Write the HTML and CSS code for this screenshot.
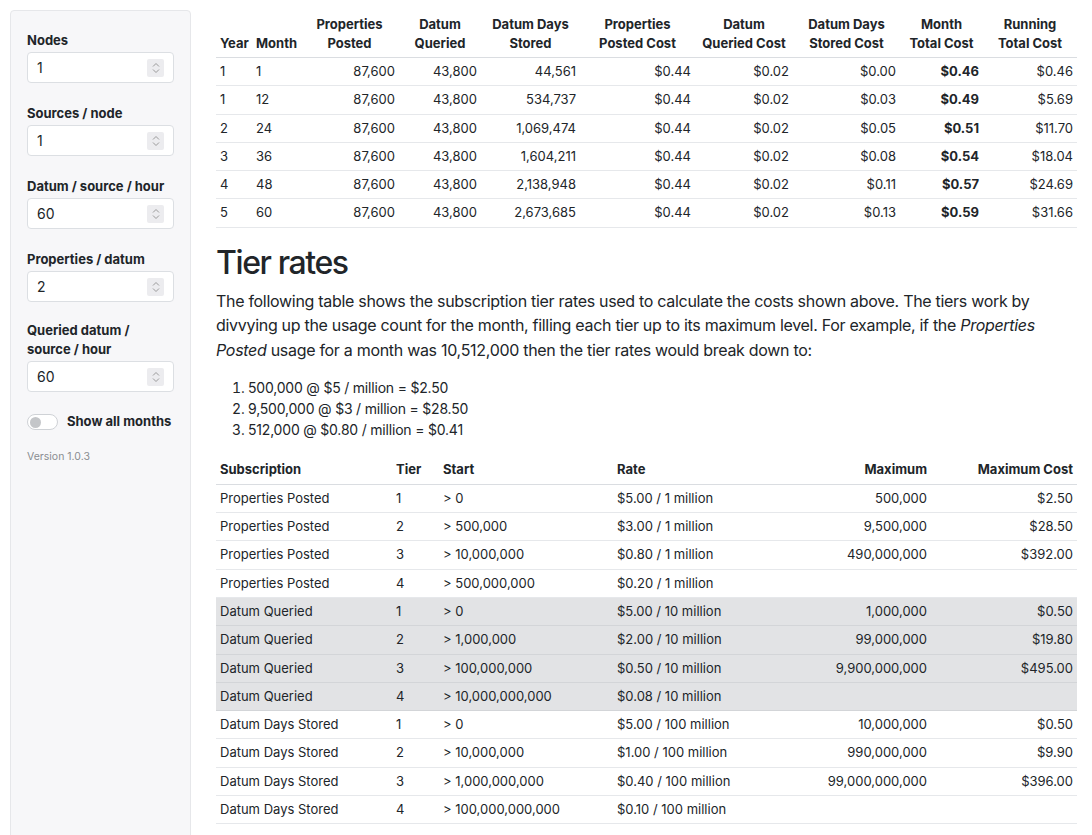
FILE: index.html
```html
<!DOCTYPE html>
<html>
<head>
<meta charset="utf-8">
<link rel="stylesheet" href="styles.css">
</head>
<body>
<div class="page">
  <aside class="sidebar">
    <div class="group">
      <label class="lbl">Nodes</label>
      <div class="num"><span>1</span><span class="spin"><svg width="8" height="12" viewBox="0 0 8 12"><path d="M1 4.5 L4 1.5 L7 4.5 M1 7.5 L4 10.5 L7 7.5" fill="none" stroke="#9a9a9a" stroke-width="1"/></svg></span></div>
    </div>
    <div class="group">
      <label class="lbl">Sources / node</label>
      <div class="num"><span>1</span><span class="spin"><svg width="8" height="12" viewBox="0 0 8 12"><path d="M1 4.5 L4 1.5 L7 4.5 M1 7.5 L4 10.5 L7 7.5" fill="none" stroke="#9a9a9a" stroke-width="1"/></svg></span></div>
    </div>
    <div class="group">
      <label class="lbl">Datum / source / hour</label>
      <div class="num"><span>60</span><span class="spin"><svg width="8" height="12" viewBox="0 0 8 12"><path d="M1 4.5 L4 1.5 L7 4.5 M1 7.5 L4 10.5 L7 7.5" fill="none" stroke="#9a9a9a" stroke-width="1"/></svg></span></div>
    </div>
    <div class="group">
      <label class="lbl">Properties / datum</label>
      <div class="num"><span>2</span><span class="spin"><svg width="8" height="12" viewBox="0 0 8 12"><path d="M1 4.5 L4 1.5 L7 4.5 M1 7.5 L4 10.5 L7 7.5" fill="none" stroke="#9a9a9a" stroke-width="1"/></svg></span></div>
    </div>
    <div class="group tight">
      <label class="lbl two">Queried datum /<br>source / hour</label>
      <div class="num"><span>60</span><span class="spin"><svg width="8" height="12" viewBox="0 0 8 12"><path d="M1 4.5 L4 1.5 L7 4.5 M1 7.5 L4 10.5 L7 7.5" fill="none" stroke="#9a9a9a" stroke-width="1"/></svg></span></div>
    </div>
    <div class="toggle-row">
      <span class="switch"><span class="knob"></span></span>
      <span class="toggle-label">Show all months</span>
    </div>
    <div class="version">Version 1.0.3</div>
  </aside>

  <main class="main">
    <table class="tbl costs">
      <colgroup>
        <col style="width:36px"><col style="width:48px"><col style="width:99px"><col style="width:82px"><col style="width:99px"><col style="width:115px"><col style="width:98px"><col style="width:107px"><col style="width:83px"><col style="width:94px">
      </colgroup>
      <thead>
        <tr>
          <th class="l">Year</th><th class="l">Month</th><th>Properties<br>Posted</th><th>Datum<br>Queried</th><th>Datum Days<br>Stored</th><th>Properties<br>Posted Cost</th><th>Datum<br>Queried Cost</th><th>Datum Days<br>Stored Cost</th><th>Month<br>Total Cost</th><th>Running<br>Total Cost</th>
        </tr>
      </thead>
      <tbody>
        <tr><td>1</td><td>1</td><td class="r">87,600</td><td class="r">43,800</td><td class="r">44,561</td><td class="r">$0.44</td><td class="r">$0.02</td><td class="r">$0.00</td><td class="r b">$0.46</td><td class="r">$0.46</td></tr>
        <tr><td>1</td><td>12</td><td class="r">87,600</td><td class="r">43,800</td><td class="r">534,737</td><td class="r">$0.44</td><td class="r">$0.02</td><td class="r">$0.03</td><td class="r b">$0.49</td><td class="r">$5.69</td></tr>
        <tr><td>2</td><td>24</td><td class="r">87,600</td><td class="r">43,800</td><td class="r">1,069,474</td><td class="r">$0.44</td><td class="r">$0.02</td><td class="r">$0.05</td><td class="r b">$0.51</td><td class="r">$11.70</td></tr>
        <tr><td>3</td><td>36</td><td class="r">87,600</td><td class="r">43,800</td><td class="r">1,604,211</td><td class="r">$0.44</td><td class="r">$0.02</td><td class="r">$0.08</td><td class="r b">$0.54</td><td class="r">$18.04</td></tr>
        <tr><td>4</td><td>48</td><td class="r">87,600</td><td class="r">43,800</td><td class="r">2,138,948</td><td class="r">$0.44</td><td class="r">$0.02</td><td class="r">$0.11</td><td class="r b">$0.57</td><td class="r">$24.69</td></tr>
        <tr><td>5</td><td>60</td><td class="r">87,600</td><td class="r">43,800</td><td class="r">2,673,685</td><td class="r">$0.44</td><td class="r">$0.02</td><td class="r">$0.13</td><td class="r b">$0.59</td><td class="r">$31.66</td></tr>
      </tbody>
    </table>

    <h2 class="title">Tier rates</h2>
    <p class="intro">The following table shows the subscription tier rates used to calculate the costs shown above. The tiers work by divvying up the usage count for the month, filling each tier up to its maximum level. For example, if the <em>Properties Posted</em> usage for a month was 10,512,000 then the tier rates would break down to:</p>
    <ol class="breakdown">
      <li>500,000 @ $5 / million = $2.50</li>
      <li>9,500,000 @ $3 / million = $28.50</li>
      <li>512,000 @ $0.80 / million = $0.41</li>
    </ol>

    <table class="tbl tiers">
      <colgroup>
        <col style="width:176px"><col style="width:47px"><col style="width:174px"><col style="width:167px"><col style="width:151px"><col style="width:146px">
      </colgroup>
      <thead>
        <tr><th class="l">Subscription</th><th class="l">Tier</th><th class="l">Start</th><th class="l">Rate</th><th class="r">Maximum</th><th class="r">Maximum Cost</th></tr>
      </thead>
      <tbody>
        <tr><td>Properties Posted</td><td>1</td><td>&gt; 0</td><td>$5.00 / 1 million</td><td class="r">500,000</td><td class="r">$2.50</td></tr>
        <tr><td>Properties Posted</td><td>2</td><td>&gt; 500,000</td><td>$3.00 / 1 million</td><td class="r">9,500,000</td><td class="r">$28.50</td></tr>
        <tr><td>Properties Posted</td><td>3</td><td>&gt; 10,000,000</td><td>$0.80 / 1 million</td><td class="r">490,000,000</td><td class="r">$392.00</td></tr>
        <tr><td>Properties Posted</td><td>4</td><td>&gt; 500,000,000</td><td>$0.20 / 1 million</td><td class="r"></td><td class="r"></td></tr>
        <tr class="shade"><td>Datum Queried</td><td>1</td><td>&gt; 0</td><td>$5.00 / 10 million</td><td class="r">1,000,000</td><td class="r">$0.50</td></tr>
        <tr class="shade"><td>Datum Queried</td><td>2</td><td>&gt; 1,000,000</td><td>$2.00 / 10 million</td><td class="r">99,000,000</td><td class="r">$19.80</td></tr>
        <tr class="shade"><td>Datum Queried</td><td>3</td><td>&gt; 100,000,000</td><td>$0.50 / 10 million</td><td class="r">9,900,000,000</td><td class="r">$495.00</td></tr>
        <tr class="shade"><td>Datum Queried</td><td>4</td><td>&gt; 10,000,000,000</td><td>$0.08 / 10 million</td><td class="r"></td><td class="r"></td></tr>
        <tr><td>Datum Days Stored</td><td>1</td><td>&gt; 0</td><td>$5.00 / 100 million</td><td class="r">10,000,000</td><td class="r">$0.50</td></tr>
        <tr><td>Datum Days Stored</td><td>2</td><td>&gt; 10,000,000</td><td>$1.00 / 100 million</td><td class="r">990,000,000</td><td class="r">$9.90</td></tr>
        <tr><td>Datum Days Stored</td><td>3</td><td>&gt; 1,000,000,000</td><td>$0.40 / 100 million</td><td class="r">99,000,000,000</td><td class="r">$396.00</td></tr>
        <tr><td>Datum Days Stored</td><td>4</td><td>&gt; 100,000,000,000</td><td>$0.10 / 100 million</td><td class="r"></td><td class="r"></td></tr>
      </tbody>
    </table>
  </main>
</div>
</body>
</html>
```
FILE: styles.css
```css
* { box-sizing: border-box; }
html, body { margin: 0; padding: 0; }
body {
  font-family: "Inter", "Liberation Sans", sans-serif;
  color: #212529;
  background: #fff;
  font-size: 16px;
  line-height: 1.5;
}
.page {
  display: flex;
  align-items: stretch;
  gap: 25px;
  padding: 10px 15px 0 10px;
}
.sidebar {
  flex: 0 0 181px;
  width: 181px;
  min-height: 900px;
  background: #f7f7f9;
  border: 1px solid #e6e7ea;
  border-radius: 4px;
  padding: 19px 16px 16px 16px;
}
.group { margin-bottom: 20px; }
.group.tight { margin-top: -1px; }
.lbl {
  display: block;
  font-size: 13px;
  font-weight: 700;
  line-height: 20px;
  margin-bottom: 2px;
}
.lbl.two { line-height: 19px; }
.num {
  display: flex;
  align-items: center;
  justify-content: space-between;
  height: 31px;
  background: #fff;
  border: 1px solid #dcdfe3;
  border-radius: 4px;
  padding: 0 9px 0 9px;
  font-size: 14px;
}
.spin {
  display: flex;
  align-items: center;
  justify-content: center;
  width: 17px;
  height: 18px;
  background: #ececef;
  border-radius: 2px;
}
.toggle-row {
  display: flex;
  align-items: center;
  gap: 9px;
  margin-top: 0;
  height: 20px;
}
.switch {
  display: flex;
  align-items: center;
  width: 31px;
  height: 16px;
  border: 1px solid #cfd2d6;
  border-radius: 8px;
  background: #fff;
  padding-left: 2px;
}
.knob {
  width: 11px;
  height: 11px;
  border-radius: 50%;
  background: #c4c6c9;
}
.toggle-label {
  font-size: 13px;
  font-weight: 700;
}
.version {
  margin-top: 17px;
  font-size: 10.5px;
  color: #8a8d91;
}
.main {
  flex: 0 0 861px;
  width: 861px;
}
.tbl {
  width: 861px;
  table-layout: fixed;
  border-collapse: collapse;
  font-size: 13px;
  line-height: 19.3px;
  margin-bottom: 16px;
}
.tbl th, .tbl td {
  padding: 4px 4px;
  white-space: nowrap;
}
.tbl th {
  font-weight: 700;
  text-align: center;
  vertical-align: bottom;
  border-bottom: 1px solid #dadde1;
}
.costs th { line-height: 19px; }
.tbl td {
  border-bottom: 1px solid #e6e8eb;
  text-align: left;
}
.tbl .l { text-align: left; }
.tbl .r { text-align: right; }
.tbl .b { font-weight: 700; }
.costs { margin-top: 1px; }
.tiers tr.shade td { background: #e2e3e5; border-bottom-color: #d3d5d8; }
.title {
  font-size: 32px;
  font-weight: 500;
  line-height: 1.2;
  letter-spacing: -1.4px;
  margin: 0 0 7px 0;
}
.intro {
  margin: 0 0 14.5px 0;
  font-size: 16px;
  line-height: 24.3px;
  letter-spacing: -0.3px;
}
.breakdown {
  margin: 0 0 16px 0;
  padding-left: 32px;
  font-size: 14px;
  line-height: 21.3px;
  letter-spacing: -0.2px;
}
```
